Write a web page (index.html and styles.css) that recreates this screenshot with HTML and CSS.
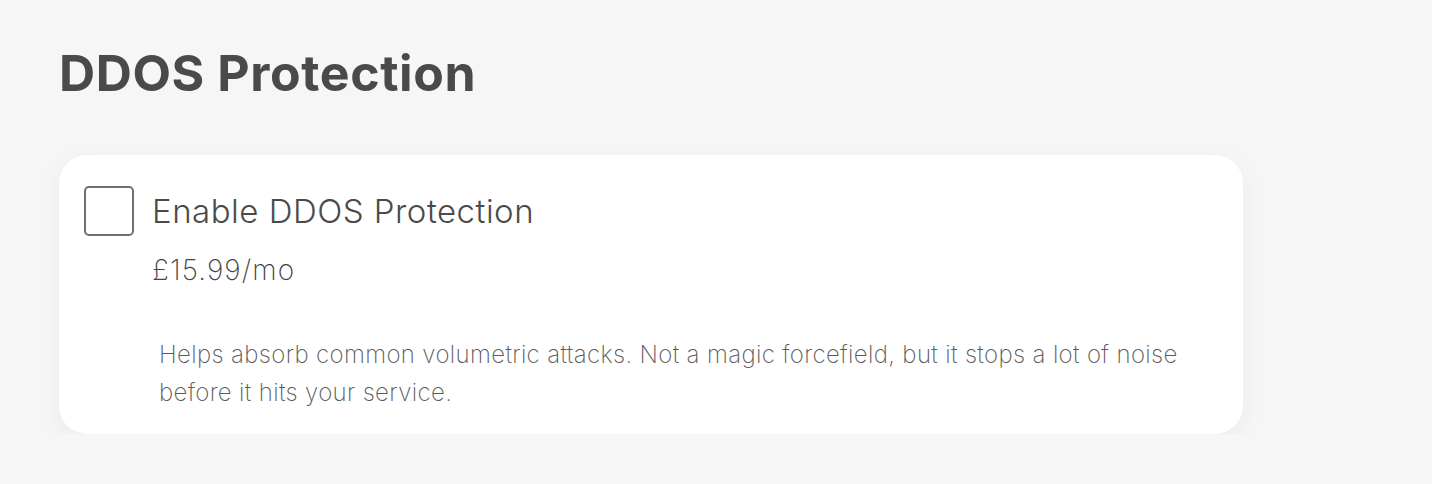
FILE: index.html
```html
<!DOCTYPE html>
<html lang="en">
<head>
<meta charset="utf-8">
<title>DDOS Protection</title>
<link rel="stylesheet" href="styles.css">
</head>
<body>
<main class="page">
  <h1 class="title">DDOS Protection</h1>
  <section class="card">
    <label class="option">
      <span class="checkbox"></span>
      <span class="option-label">Enable DDOS Protection</span>
    </label>
    <div class="price">£15.99/mo</div>
    <p class="desc">Helps absorb common volumetric attacks. Not a magic forcefield, but it stops a lot of noise before it hits your service.</p>
  </section>
</main>
</body>
</html>
```
FILE: styles.css
```css
* { box-sizing: border-box; }
html, body { margin: 0; padding: 0; }
body {
  background: #f6f6f6;
  font-family: "Inter", "Open Sans", sans-serif;
  color: #4a4a4a;
}
.page {
  padding: 40px 0 0 59px;
  width: 1243px;
}
.title {
  margin: 0;
  font-size: 50px;
  font-weight: 700;
  line-height: 66px;
  letter-spacing: 0.6px;
  color: #4a4a4a;
}
.card {
  margin-top: 49px;
  width: 1184px;
  background: #fff;
  border-radius: 28px;
  box-shadow: 0 6px 24px rgba(0,0,0,0.05);
  padding: 31px 24px 22px 25px;
}
.option {
  display: flex;
  align-items: center;
  gap: 18px;
}
.checkbox {
  width: 50px;
  height: 50px;
  border: 2px solid #707070;
  border-radius: 5px;
  flex: none;
}
.option-label {
  font-size: 33px;
  font-weight: 300;
  letter-spacing: 0.5px;
  color: #4a4a4a;
}
.price {
  margin-top: 17px;
  padding-left: 68px;
  font-size: 28px;
  font-weight: 200;
  letter-spacing: 1.1px;
  color: #444;
}
.desc {
  margin: 49px 0 0;
  padding-left: 75px;
  max-width: 1110px;
  font-size: 24px;
  font-weight: 200;
  line-height: 38px;
  letter-spacing: 0.35px;
  color: #5a5a5a;
}
```
